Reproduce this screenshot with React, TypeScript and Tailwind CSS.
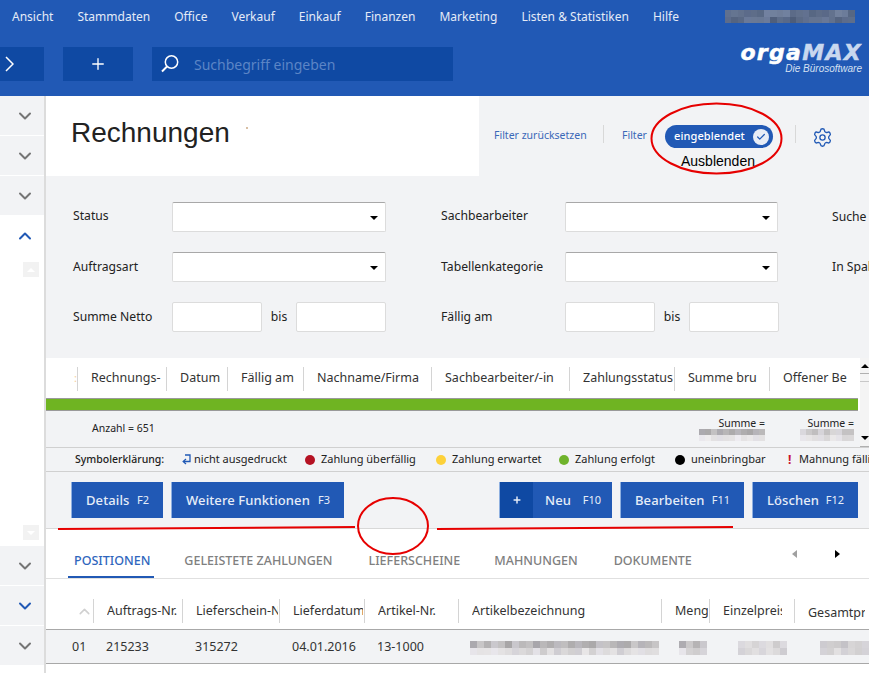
import React from "react";
import { ChevronDown, ChevronUp, Plus, Settings, Check } from "lucide-react";

const MENU = ["Ansicht", "Stammdaten", "Office", "Verkauf", "Einkauf", "Finanzen", "Marketing", "Listen & Statistiken", "Hilfe"];

const FONT = "font-['Noto_Sans','Open_Sans',sans-serif]";

// pixelated censor blocks, two rows of cells: upper one darker
function pixels(cols: number, seed: number, dark: number[], light: number[]) {
  const out: string[] = [];
  for (let r = 0; r < 2; r++) {
    const [lo, hi] = r === 0 ? dark : light;
    for (let c = 0; c < cols; c++) {
      const n = Math.abs(Math.sin((c + 1) * 12.9898 + seed + r * 78.233) * 43758.5453) % 1;
      const v = Math.round(lo + (hi - lo) * n);
      out.push(`rgb(${v},${v - 2},${v + (c % 3 === 0 ? 3 : -1)})`);
    }
  }
  return out;
}

function Censored({ cols, cell, seed = 1, dark = [170, 205], light = [205, 232], className }: { cols: number; cell: number; seed?: number; dark?: number[]; light?: number[]; className?: string }) {
  return (
    <div
      className={"grid shrink-0 " + (className || "")}
      style={{ gridTemplateColumns: `repeat(${cols}, ${cell}px)`, gridAutoRows: `${cell}px` }}
    >
      {pixels(cols, seed, dark, light).map((c, i) => (
        <div key={i} style={{ background: c }} />
      ))}
    </div>
  );
}

function SideBtn({ active, blue }: { active?: boolean; blue?: boolean }) {
  return (
    <div className={`h-10 shrink-0 flex items-center justify-center pl-[6px] border-b border-white ${active ? "bg-white" : "bg-[#f2f3f5]"}`}>
      {active ? (
        <ChevronUp size={20} strokeWidth={2.4} className="text-[#2159b5]" />
      ) : (
        <ChevronDown size={20} strokeWidth={2.4} className={blue ? "text-[#2159b5]" : "text-[#757575]"} />
      )}
    </div>
  );
}

function SelectBox({ w }: { w: string }) {
  return (
    <div className={`${w} h-[30px] bg-white border border-[#dcdcdc] border-t-[#a8a8a8] rounded-[2px] flex items-center justify-end pr-[7px]`}>
      <span className="w-0 h-0 border-x-[4px] border-x-transparent border-t-[4px] border-t-black mt-[2px]" />
    </div>
  );
}

function InputBox() {
  return <div className="w-[90px] h-[30px] bg-white border border-[#dcdcdc] rounded-[2px]" />;
}

// clip: width of the visible part of a cut-off column title
function HeadCell({ w, label, clip = "w-full" }: { w: string; label: string; clip?: string }) {
  return (
    <div className={`${w} h-[24px] pl-[13px] shrink-0 border-r border-[#d4d4d4] flex items-center`}>
      <div className={`${clip} overflow-hidden whitespace-nowrap`}>{label}</div>
    </div>
  );
}

function Legend({ dot, label, w }: { dot: React.ReactNode; label: string; w: string }) {
  return (
    <div className={`${w} shrink-0 flex items-center gap-[6px] whitespace-nowrap`}>
      {dot}
      <span>{label}</span>
    </div>
  );
}

function ActionBtn({ label, fkey, w, plus }: { label: string; fkey: string; w: string; plus?: boolean }) {
  return (
    <div className={`${w} h-9 bg-[#2159b5] text-[#e6edf8] flex items-center justify-between ${plus ? "pr-[11px]" : "px-[14px]"} border-l border-[#8fb0e0] shrink-0`}>
      {plus && (
        <span className="w-[33px] h-full bg-[#0f49a3] flex items-center justify-center mr-[12px]">
          <Plus size={10} strokeWidth={3.5} />
        </span>
      )}
      <span className="text-[13px] font-medium tracking-[0.1px] pt-[1px]">{label}</span>
      <span className={`text-[11px] pt-[1px] ${plus ? "ml-auto" : ""}`}>{fkey}</span>
    </div>
  );
}

export default function App() {
  return (
    <div className={`relative w-[869px] h-[673px] overflow-hidden bg-white text-[#222] ${FONT}`}>
      {/* blue header */}
      <div className="h-24 bg-[#2159b5] flex flex-col">
        <div className="h-[33px] flex items-center pl-3 text-[12px] text-[#e4ebf7] gap-[24px] whitespace-nowrap">
          {MENU.map((m) => (
            <span key={m}>{m}</span>
          ))}
          <Censored cols={20} cell={6.5} seed={4} dark={[110, 150]} light={[95, 140]} className="ml-[22px] opacity-70" />
        </div>
        <div className="flex items-start pt-[14px]">
          <div className="w-11 h-[34px] bg-[#0f49a3] flex items-center pl-[5px]">
            <svg width="9" height="16" viewBox="0 0 9 16" fill="none" stroke="white" strokeWidth="1.5">
              <path d="M1 1 L8 8 L1 15" />
            </svg>
          </div>
          <div className="ml-[19px] w-[70px] h-[34px] bg-[#0f49a3] flex items-center justify-center text-white">
            <Plus size={18} strokeWidth={1.8} />
          </div>
          <div className="ml-[19px] w-[301px] h-[34px] bg-[#0f49a3] flex items-center pl-2">
            <svg width="20" height="20" viewBox="0 0 20 20" fill="none" stroke="white" strokeWidth="1.5">
              <circle cx="11.5" cy="8" r="6.2" />
              <path d="M7 12.5 L2 17.5" strokeWidth="2" />
            </svg>
            <span className="ml-[14px] mt-[1px] text-[14px] text-[#5c85c6]">Suchbegriff eingeben</span>
          </div>
          <div className="ml-auto pr-[7px] -mt-[4px] flex flex-col items-end text-white">
            <div className="font-['DejaVu_Sans',sans-serif] italic font-bold text-[22px] leading-[20px] tracking-[1.3px] [-webkit-text-stroke:0.5px_white]">
              orga<span className="text-[#c9d8ef] [-webkit-text-stroke:0.5px_#c9d8ef]">MAX</span>
            </div>
            <div className="font-['Liberation_Sans',sans-serif] italic text-[10px] leading-[11px] text-[#d5e0f2]">Die Bürosoftware</div>
          </div>
        </div>
      </div>

      <div className="flex h-[577px]">
        {/* left rail */}
        <div className="w-[46px] shrink-0 border-r-2 border-[#dcdcdc] flex flex-col bg-white">
          <SideBtn />
          <SideBtn />
          <SideBtn />
          <SideBtn active />
          <div className="h-[290px] shrink-0 bg-white pl-[23px] flex flex-col justify-between py-[6px]">
            <div className="w-4 h-[15px] bg-[#f2f2f2] flex items-center justify-center">
              <span className="w-0 h-0 border-x-[4px] border-x-transparent border-b-[4px] border-b-white" />
            </div>
            <div className="w-4 h-[15px] bg-[#f2f2f2] flex items-center justify-center">
              <span className="w-0 h-0 border-x-[4px] border-x-transparent border-t-[4px] border-t-white" />
            </div>
          </div>
          <SideBtn />
          <SideBtn blue />
          <SideBtn />
        </div>

        <div className="flex-1 min-w-0 flex flex-col">
          {/* title + filter */}
          <div className="bg-[#f2f3f5] h-[262px] shrink-0 flex flex-col">
            <div className="h-20 flex">
              <div className="relative w-[433px] bg-white pl-[25px] pt-[19px] font-['Liberation_Sans',sans-serif] text-[28px] leading-[36px] text-[#222]">
                Rechnungen
                <span className="absolute left-[200px] top-[31px] w-[2px] h-[2px] bg-[#d8bfa4]" />
              </div>
              <div className="flex-1 flex items-start pt-[29px] text-[10.5px] text-[#3b68b8] whitespace-nowrap">
                <span className="ml-[15px] w-[91px] leading-[20px]">Filter zurücksetzen</span>
                <span className="ml-[18px] w-px h-[18px] bg-[#d8d8d8]" />
                <span className="ml-[18px] w-[24px] leading-[20px]">Filter</span>
                <div className="ml-[19px] w-[108px] h-[23px] shrink-0 rounded-full bg-[#2159b5] text-white flex items-center pl-[9px] pr-[2px] justify-between text-[11px]">
                  <span className="font-medium tracking-[0.1px]">eingeblendet</span>
                  <span className="w-[16px] h-[16px] rounded-full bg-[#e8edf6] flex items-center justify-center mr-[2px]">
                    <Check size={10} strokeWidth={3} className="text-[#2159b5]" />
                  </span>
                </div>
                <span className="ml-[22px] w-px h-[18px] bg-[#d8d8d8]" />
                <Settings size={21} strokeWidth={1.5} className="ml-[16px] text-[#2159b5] mt-[2px]" />
              </div>
            </div>

            <div className="grid grid-cols-[99px_269px_124px_267px_1fr] auto-rows-[30px] gap-y-[20px] pt-[26px] pl-[27px] text-[12.2px] items-center whitespace-nowrap">
              <span className="-mt-[2px]">Status</span>
              <SelectBox w="w-[214px]" />
              <span className="-mt-[2px]">Sachbearbeiter</span>
              <SelectBox w="w-[213px]" />
              <span>Suche</span>

              <span>Auftragsart</span>
              <SelectBox w="w-[214px]" />
              <span>Tabellenkategorie</span>
              <SelectBox w="w-[213px]" />
              <span>In Spal</span>

              <span>Summe Netto</span>
              <div className="flex items-center">
                <InputBox />
                <span className="w-[34px] text-center">bis</span>
                <InputBox />
              </div>
              <span>Fällig am</span>
              <div className="flex items-center">
                <InputBox />
                <span className="w-[34px] text-center">bis</span>
                <InputBox />
              </div>
              <span />
            </div>
          </div>

          {/* invoice table */}
          <div className="h-[40px] shrink-0 bg-white flex items-center pl-[28px] pt-[1px] text-[12.5px] text-[#333]">
            <span className="w-[3px] text-[11px] text-[#f6cf9a]">:</span>
            <div className="h-[24px] border-l border-[#d4d4d4]" />
            <HeadCell w="w-[89px]" label="Rechnungs-" />
            <HeadCell w="w-[61px]" label="Datum" />
            <HeadCell w="w-[76px]" label="Fällig am" />
            <HeadCell w="w-[128px]" label="Nachname/Firma" />
            <HeadCell w="w-[138px]" label="Sachbearbeiter/-in" />
            <HeadCell w="w-[105px]" label="Zahlungsstatus" />
            <HeadCell w="w-[95px]" label="Summe bru" />
            <div className="pl-[13px] whitespace-nowrap">Offener Be</div>
          </div>
          <div className="h-[13px] shrink-0 bg-[#6fb422] border-y border-[#9a9a9a] mr-[11px]" />
          <div className="h-[37px] shrink-0 bg-[#f2f3f5] border-b border-[#d0d0d0] flex text-[10.5px] leading-[13px]">
            <span className="ml-[46px] mt-[11px]">Anzahl = 651</span>
            <div className="ml-auto mr-[15px] flex gap-[35px] pt-[6px]">
              <div className="flex flex-col items-end">
                <span>Summe =</span>
                <Censored cols={11} cell={6} seed={2} dark={[165, 195]} light={[225, 240]} className="-mt-[1px]" />
              </div>
              <div className="flex flex-col items-end">
                <span>Summe =</span>
                <Censored cols={9} cell={6} seed={7} dark={[190, 220]} light={[215, 235]} className="-mt-[1px]" />
              </div>
            </div>
          </div>
          <div className="h-6 shrink-0 bg-[#f2f3f5] border-b border-[#d0d0d0] flex items-center pl-[29px] text-[11px] whitespace-nowrap overflow-hidden">
            <span className="w-[106px] shrink-0 font-medium text-[10.5px]">Symbolerklärung:</span>
            <Legend
              w="w-[124px]"
              label="nicht ausgedruckt"
              dot={
                <svg width="10" height="11" viewBox="0 0 10 11" fill="none" stroke="#2159b5" strokeWidth="1.3" className="-mr-[3px]">
                  <path d="M4 1 H9 V7.5 H3" />
                  <path d="M5 5 L2.2 7.5 L5 10" />
                </svg>
              }
            />
            <Legend w="w-[131px]" label="Zahlung überfällig" dot={<span className="w-[10px] h-[10px] rounded-full bg-[#b51223]" />} />
            <Legend w="w-[123px]" label="Zahlung erwartet" dot={<span className="w-[10px] h-[10px] rounded-full bg-[#fdd13a]" />} />
            <Legend w="w-[116px]" label="Zahlung erfolgt" dot={<span className="w-[10px] h-[10px] rounded-full bg-[#6fb32c]" />} />
            <Legend w="w-[113px]" label="uneinbringbar" dot={<span className="w-[10px] h-[10px] rounded-full bg-black" />} />
            <Legend w="w-[100px]" label="Mahnung fällig" dot={<span className="text-[#c8102e] font-bold text-[12px] leading-none w-[5px]">!</span>} />
          </div>
          <div className="h-[57px] shrink-0 bg-[#f2f3f5] border-b border-[#d8d8d8] flex items-start pt-[10px] pl-[25px] pr-[11px] gap-[8px]">
            <ActionBtn w="w-[92px]" label="Details" fkey="F2" />
            <ActionBtn w="w-[173px]" label="Weitere Funktionen" fkey="F3" />
            <div className="flex-1" />
            <ActionBtn w="w-[113px]" label="Neu" fkey="F10" plus />
            <ActionBtn w="w-[124px]" label="Bearbeiten" fkey="F11" />
            <ActionBtn w="w-[106px]" label="Löschen" fkey="F12" />
          </div>

          {/* tabs */}
          <div className="h-[50px] shrink-0 border-b border-[#e0e0e0] flex text-[12.5px] font-medium text-[#808080] pl-[22px] relative whitespace-nowrap">
            <div className="pt-[23px] pl-[6px] pr-[4px] border-b-2 border-[#2159b5] text-[#2f66bd] h-[49px]">POSITIONEN</div>
            <div className="pt-[23px] ml-[30px]">GELEISTETE ZAHLUNGEN</div>
            <div className="pt-[23px] ml-[36px]">LIEFERSCHEINE</div>
            <div className="pt-[23px] ml-[34px]">MAHNUNGEN</div>
            <div className="pt-[23px] ml-[36px]">DOKUMENTE</div>
            <span className="absolute left-[746px] top-[21px] w-0 h-0 border-y-[4px] border-y-transparent border-r-[5px] border-r-[#a0a0a0]" />
            <span className="absolute left-[789px] top-[21px] w-0 h-0 border-y-[4px] border-y-transparent border-l-[5px] border-l-black" />
          </div>

          {/* positions */}
          <div className="h-[50px] shrink-0 flex items-end pb-[6px] text-[12.5px] text-[#333] pl-[30px] overflow-hidden">
            <div className="w-[18px] h-[24px] flex items-center shrink-0 border-r border-[#d4d4d4]">
              <ChevronUp size={17} strokeWidth={2.2} className="text-[#d0d0d0]" />
            </div>
            <HeadCell w="w-[89px]" label="Auftrags-Nr." />
            <HeadCell w="w-[97px]" label="Lieferschein-Nr." clip="w-[82px]" />
            <HeadCell w="w-[85px]" label="Lieferdatum" clip="w-[70px]" />
            <HeadCell w="w-[94px]" label="Artikel-Nr." />
            <HeadCell w="w-[203px]" label="Artikelbezeichnung" />
            <HeadCell w="w-[48px]" label="Menge" clip="w-[33px]" />
            <HeadCell w="w-[85px]" label="Einzelpreis" clip="w-[59px]" />
            <div className="pl-[13px] w-[70px] overflow-hidden whitespace-nowrap">Gesamtpreis</div>
          </div>
          <div className="h-[35px] shrink-0 bg-[#f2f3f5] border-y border-[#a8a8a8] flex items-center pl-[26px] pt-[2px] text-[12.5px] text-[#333] overflow-hidden">
            <span className="w-[34px] shrink-0">01</span>
            <span className="w-[89px] shrink-0">215233</span>
            <span className="w-[97px] shrink-0">315272</span>
            <span className="w-[85px] shrink-0">04.01.2016</span>
            <span className="w-[93px] shrink-0">13-1000</span>
            <Censored cols={27} cell={7} seed={3} dark={[165, 205]} light={[205, 232]} />
            <Censored cols={4} cell={7} seed={5} className="ml-[20px]" />
            <Censored cols={7} cell={7} seed={6} dark={[200, 225]} light={[205, 230]} className="ml-[31px]" />
            <Censored cols={7} cell={7} seed={8} dark={[195, 220]} light={[210, 232]} className="ml-[33px]" />
          </div>
        </div>
      </div>

      {/* scrollbar of the upper table */}
      <div className="absolute left-[860px] top-[358px] w-[9px] h-[89px] bg-[#f4f4f4] flex flex-col border-b border-[#b0b0b0]">
        <div className="w-full h-[16px] border-b border-[#b0b0b0] flex justify-center pt-[6px]">
          <span className="w-0 h-0 border-x-[4px] border-x-transparent border-b-[4px] border-b-black" />
        </div>
        <div className="w-full h-[8px] border-b border-[#c8c8c8]" />
        <div className="flex-1" />
        <div className="w-full h-[13px] flex justify-center pt-[3px]">
          <span className="w-0 h-0 border-x-[4px] border-x-transparent border-t-[4px] border-t-black" />
        </div>
      </div>

      {/* red annotations drawn on the screenshot */}
      <svg className="absolute inset-0 pointer-events-none" width="869" height="673" fill="none" stroke="#e60000" strokeWidth="2">
        <ellipse cx="716.5" cy="138.5" rx="65" ry="35" />
        <ellipse cx="393" cy="526" rx="35" ry="28" />
        <path d="M58 529 L355 527" />
        <path d="M437 529 L733 527" />
      </svg>
      <div className="absolute left-[681px] top-[152px] font-['Liberation_Sans',sans-serif] text-[14px] leading-[18px] text-black">Ausblenden</div>
    </div>
  );
}
